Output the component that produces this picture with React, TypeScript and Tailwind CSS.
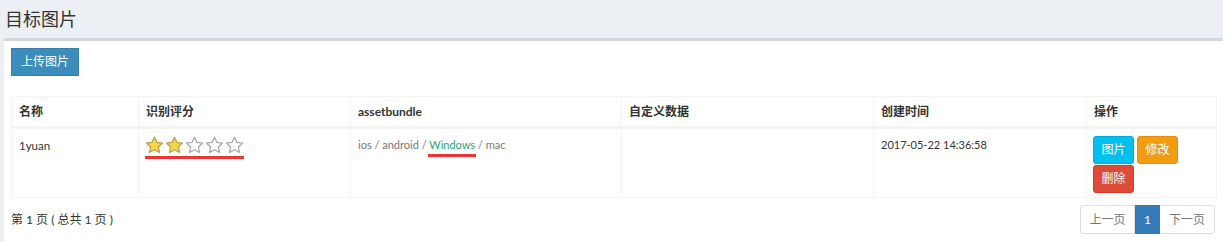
import React from "react";

function Star({ filled }: { filled: boolean }) {
  return (
    <svg width="19" height="18" viewBox="0 0 24 23">
      <path
        d="M12 1.5l3.1 6.6 7.2.9-5.3 5 1.4 7.1L12 17.6l-6.4 3.5 1.4-7.1-5.3-5 7.2-.9z"
        fill={filled ? "#f5d54a" : "#ffffff"}
        stroke={filled ? "#b9a24a" : "#a8a8a8"}
        strokeWidth="1.6"
        strokeLinejoin="round"
      />
    </svg>
  );
}

export default function App() {
  const font = { fontFamily: 'Lato, "Noto Sans CJK SC", sans-serif' };
  return (
    <div className="w-[1223px] h-[242px] bg-[#ecf0f5] overflow-hidden text-[#333]" style={font}>
      <div className="h-[38px] pl-[5px] flex items-center">
        <h1 className="text-[18px] leading-none text-[#333] font-normal">目标图片</h1>
      </div>
      <div className="ml-[4px] bg-white border-t-[3px] border-[#d2d6de] h-[204px] px-[7px] pt-[7px]">
        <button className="h-[28px] w-[68px] bg-[#3c8dbc] border border-[#367fa9] text-white text-[12px] leading-none">
          上传图片
        </button>
        <table className="mt-[20px] w-[1205px] border border-[#f4f4f4] border-collapse text-[12px] table-fixed">
          <colgroup>
            <col className="w-[127px]" />
            <col className="w-[212px]" />
            <col className="w-[271px]" />
            <col className="w-[252px]" />
            <col className="w-[213px]" />
            <col className="w-[130px]" />
          </colgroup>
          <thead>
            <tr className="h-[31px]">
              {["名称", "识别评分", "assetbundle", "自定义数据", "创建时间", "操作"].map((h) => (
                <th key={h} className="border border-[#f4f4f4] border-b-[3px] text-left font-bold px-[7px] align-middle text-[#333]">
                  {h}
                </th>
              ))}
            </tr>
          </thead>
          <tbody>
            <tr className="h-[70px] align-top">
              <td className="border border-[#f4f4f4] px-[7px] pt-[8px] text-[11.5px]">1yuan</td>
              <td className="border border-[#f4f4f4] px-[6px] pt-[7px]">
                <div className="inline-flex flex-col">
                  <div className="flex gap-[1px]">
                    <Star filled />
                    <Star filled />
                    <Star filled={false} />
                    <Star filled={false} />
                    <Star filled={false} />
                  </div>
                  <div className="h-[3px] bg-[#ee3535] mt-[2px]" />
                </div>
              </td>
              <td className="border border-[#f4f4f4] px-[7px] pt-[8px] text-[#777] text-[11px]">
                ios / android /{" "}
                <span className="relative text-[#1fa67a]">
                  Windows
                  <span className="absolute left-[-1px] right-[-1px] top-[16px] h-[3px] bg-[#ee3535]" />
                </span>{" "}
                / mac
              </td>
              <td className="border border-[#f4f4f4] px-[7px] pt-[7px]"></td>
              <td className="border border-[#f4f4f4] px-[7px] pt-[8px] text-[11px]">2017-05-22 14:36:58</td>
              <td className="border border-[#f4f4f4] px-[6px] pt-[7px]">
                <div className="flex flex-wrap gap-x-[3px] gap-y-[1px] w-[90px]">
                  <button className="h-[28px] w-[41px] bg-[#00c0ef] border border-[#00acd6] rounded-[3px] text-white text-[12px]">图片</button>
                  <button className="h-[28px] w-[41px] bg-[#f39c12] border border-[#e08e0b] rounded-[3px] text-white text-[12px]">修改</button>
                  <button className="h-[28px] w-[41px] bg-[#dd4b39] border border-[#d73925] rounded-[3px] text-white text-[12px]">删除</button>
                </div>
              </td>
            </tr>
          </tbody>
        </table>
        <div className="flex items-center justify-between mt-[7px]">
          <span className="text-[12px] text-[#333]">第 1 页 ( 总共 1 页 )</span>
          <div className="flex text-[12px] h-[29px] mr-[1px]">
            <span className="w-[55px] flex items-center justify-center border border-[#ddd] rounded-l-[3px] text-[#777]">上一页</span>
            <span className="w-[25px] flex items-center justify-center bg-[#337ab7] border border-[#337ab7] text-white">1</span>
            <span className="w-[55px] flex items-center justify-center border border-[#ddd] border-l-0 rounded-r-[3px] text-[#777]">下一页</span>
          </div>
        </div>
      </div>
    </div>
  );
}
